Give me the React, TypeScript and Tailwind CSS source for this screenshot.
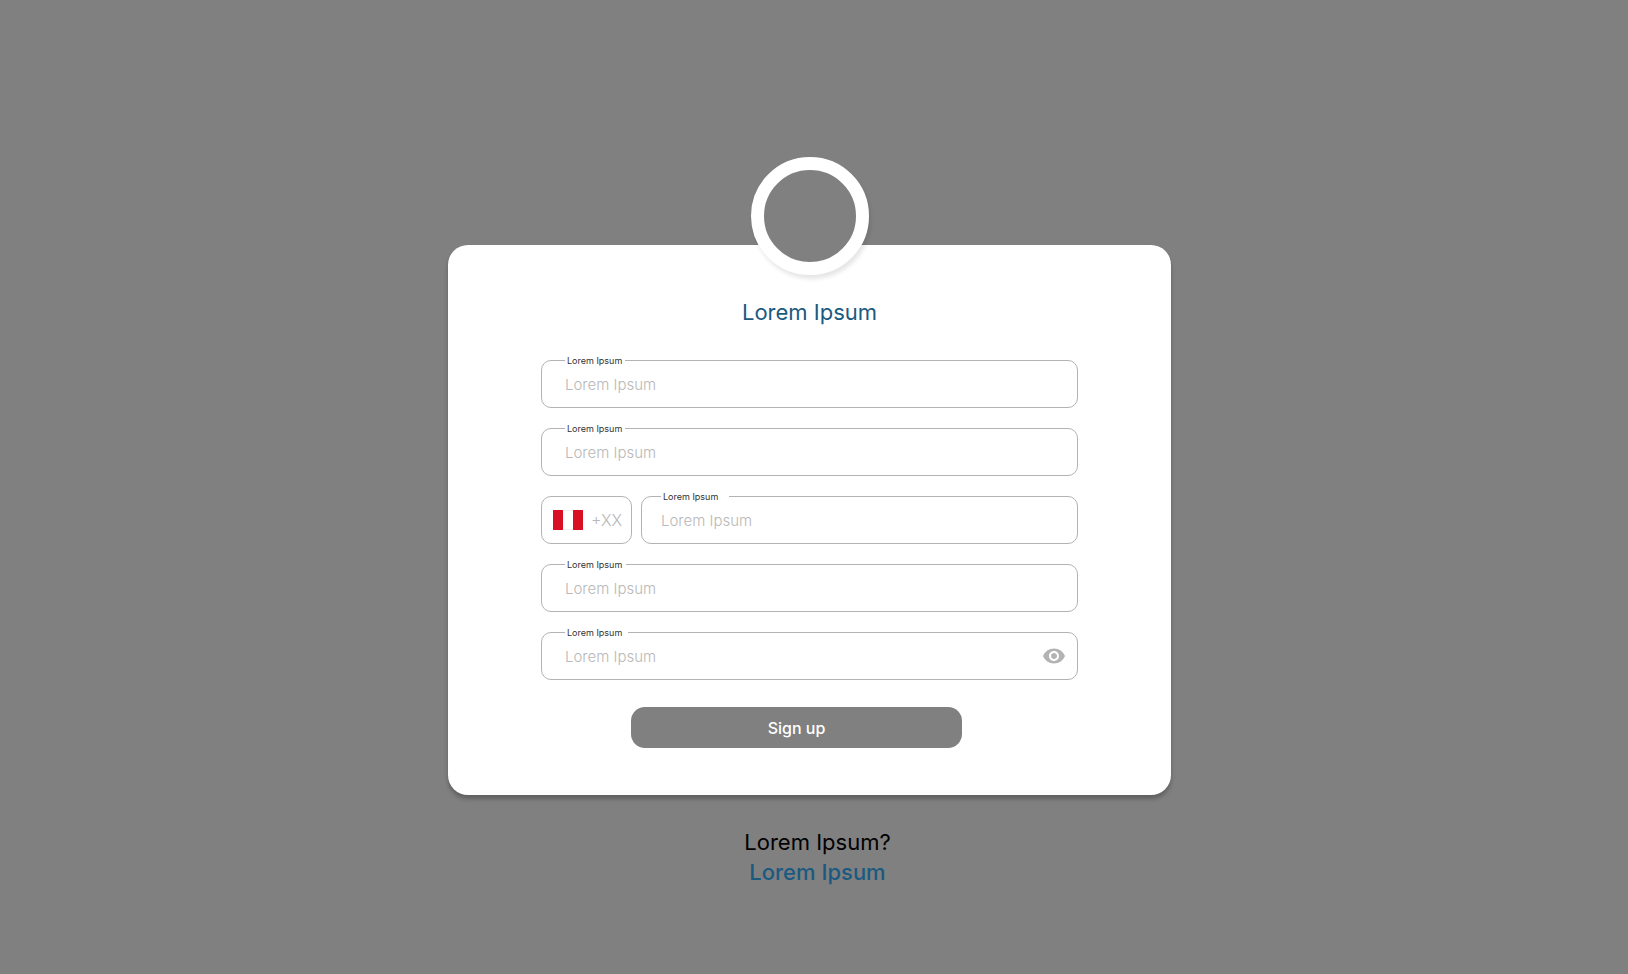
import { useState } from 'react';

type FieldProps = {
  id: string;
  type?: string;
  inset?: 'normal' | 'narrow';
  labelWidth?: string;
};

function Field({ id, type = 'text', inset = 'normal', labelWidth = 'w-[60px]' }: FieldProps) {
  const narrow = inset === 'narrow';
  return (
    <div className="relative min-w-0 flex-1">
      <input
        id={id}
        type={type}
        placeholder="Lorem Ipsum"
        className={`block h-12 w-full rounded-[10px] border border-[#b3b3b3] bg-white pr-12 text-[15px] font-light text-[#333333] outline-none placeholder:text-[#b8b8b8] ${
          narrow ? 'pl-[19px]' : 'pl-[23px]'
        }`}
      />
      <label
        htmlFor={id}
        className={`absolute -top-[5px] bg-white pl-0.5 text-[9px] leading-3 whitespace-nowrap text-[#333333] ${labelWidth} ${
          narrow ? 'left-5' : 'left-6'
        }`}
      >
        Lorem Ipsum
      </label>
    </div>
  );
}

function PeruFlag() {
  return (
    <svg viewBox="0 0 30 20" className="h-5 w-[30px] shrink-0" aria-hidden="true">
      <rect width="30" height="20" fill="#e6e6e6" />
      <rect x="10" y="0.5" width="10" height="19" fill="#ffffff" />
      <rect width="10" height="20" fill="#d91023" />
      <rect x="20" width="10" height="20" fill="#d91023" />
    </svg>
  );
}

function EyeIcon() {
  return (
    <svg viewBox="0 0 24 24" className="h-6 w-6" fill="#b3b3b3" aria-hidden="true">
      <path d="M12 4.5C7 4.5 2.73 7.61 1 12c1.73 4.39 6 7.5 11 7.5s9.27-3.11 11-7.5c-1.73-4.39-6-7.5-11-7.5zM12 17c-2.76 0-5-2.24-5-5s2.24-5 5-5 5 2.24 5 5-2.24 5-5 5zm0-8c-1.66 0-3 1.34-3 3s1.34 3 3 3 3-1.34 3-3-1.34-3-3-3z" />
    </svg>
  );
}

export default function App() {
  const [visible, setVisible] = useState(false);

  return (
    <main className="flex min-h-screen flex-col items-center bg-[#808080] px-4 pt-[157px] pb-10 font-['Inter','Open_Sans',sans-serif]">
      <div className="flex w-full max-w-[723px] flex-col items-center lg:mr-[9px]">
        <div className="z-10 size-[118px] rounded-full border-[13px] border-white bg-[#808080] shadow-[2px_4px_4px_rgba(0,0,0,0.1)]" />

        <section className="-mt-[30px] w-full rounded-[20px] bg-white px-6 pt-[51px] pb-[47px] shadow-[0_4px_4px_rgba(0,0,0,0.25)] sm:px-[93px]">
          <h1 className="text-center text-[22px] leading-8 text-[#1b5a80]">Lorem Ipsum</h1>

          <form className="mt-8 flex flex-col gap-5" onSubmit={(event) => event.preventDefault()}>
            <Field id="first-name" />
            <Field id="last-name" />

            <div className="flex gap-[9px]">
              <div className="flex h-12 w-[91px] shrink-0 items-center gap-2 rounded-[10px] border border-[#b3b3b3] pl-[11px]">
                <PeruFlag />
                <input
                  type="text"
                  aria-label="Country code"
                  placeholder="+XX"
                  className="min-w-0 flex-1 bg-transparent text-base font-light text-[#333333] outline-none placeholder:text-[#b8b8b8]"
                />
              </div>
              <Field id="phone" inset="narrow" labelWidth="w-[68px]" />
            </div>

            <Field id="email" labelWidth="w-[61px]" />

            <div className="relative flex">
              <Field id="password" type={visible ? 'text' : 'password'} labelWidth="w-[63px]" />
              <button
                type="button"
                aria-label="Show password"
                className="absolute top-3 right-3"
                onClick={() => setVisible(!visible)}
              >
                <EyeIcon />
              </button>
            </div>

            <div className="flex justify-center pt-[7px] sm:pr-[26px]">
              <button
                type="submit"
                className="h-[41px] w-full max-w-[331px] rounded-[14px] bg-[#808080] text-base font-medium text-white"
              >
                Sign up
              </button>
            </div>
          </form>
        </section>

        <footer className="mt-8 flex flex-col items-center text-[22px] leading-[30px] sm:pl-4">
          <p className="text-black">Lorem Ipsum?</p>
          <a href="#login" className="font-medium text-[#1b5a80]">
            Lorem Ipsum
          </a>
        </footer>
      </div>
    </main>
  );
}
